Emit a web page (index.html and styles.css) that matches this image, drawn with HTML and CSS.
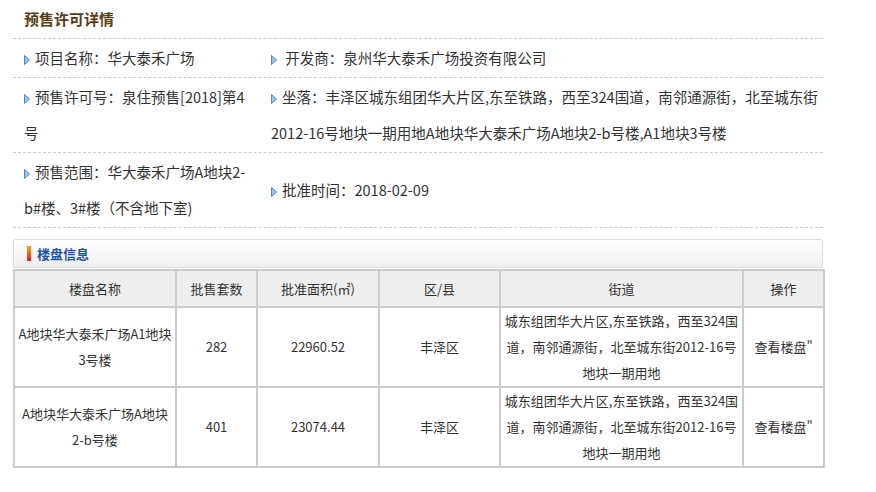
FILE: index.html
```html
<!DOCTYPE html>
<html lang="zh-CN">
<head>
<meta charset="utf-8">
<title>预售许可详情</title>
<link rel="stylesheet" href="styles.css">
</head>
<body>
<div class="wrap">
  <div class="title">预售许可详情</div>
  <div class="info-row">
    <div class="cell"><svg class="arr" viewBox="0 0 6 10"><polygon points="0.5,0.5 5.5,5 0.5,9.5" fill="#9cc4ec" stroke="#4f86c6" stroke-width="1"/></svg>项目名称：华大泰禾广场</div>
    <div class="cell"><svg class="arr" viewBox="0 0 6 10"><polygon points="0.5,0.5 5.5,5 0.5,9.5" fill="#9cc4ec" stroke="#4f86c6" stroke-width="1"/></svg>&nbsp;开发商：泉州华大泰禾广场投资有限公司</div>
  </div>
  <div class="info-row">
    <div class="cell"><svg class="arr" viewBox="0 0 6 10"><polygon points="0.5,0.5 5.5,5 0.5,9.5" fill="#9cc4ec" stroke="#4f86c6" stroke-width="1"/></svg>预售许可号：泉住预售[2018]第4号</div>
    <div class="cell"><svg class="arr" viewBox="0 0 6 10"><polygon points="0.5,0.5 5.5,5 0.5,9.5" fill="#9cc4ec" stroke="#4f86c6" stroke-width="1"/></svg>坐落：丰泽区城东组团华大片区,东至铁路，西至324国道，南邻通源街，北至城东街2012-16号地块一期用地A地块华大泰禾广场A地块2-b号楼,A1地块3号楼</div>
  </div>
  <div class="info-row">
    <div class="cell"><svg class="arr" viewBox="0 0 6 10"><polygon points="0.5,0.5 5.5,5 0.5,9.5" fill="#9cc4ec" stroke="#4f86c6" stroke-width="1"/></svg>预售范围：华大泰禾广场A地块2-b#楼、3#楼（不含地下室)</div>
    <div class="cell mid"><svg class="arr" viewBox="0 0 6 10"><polygon points="0.5,0.5 5.5,5 0.5,9.5" fill="#9cc4ec" stroke="#4f86c6" stroke-width="1"/></svg>批准时间：2018-02-09</div>
  </div>

  <div class="panel">
    <div class="panel-head"><span class="bar"></span>楼盘信息</div>
    <table class="grid">
      <colgroup>
        <col class="c1"><col class="c2"><col class="c3"><col class="c4"><col class="c5"><col class="c6">
      </colgroup>
      <thead>
        <tr><th>楼盘名称</th><th>批售套数</th><th>批准面积(㎡)</th><th>区/县</th><th>街道</th><th>操作</th></tr>
      </thead>
      <tbody>
        <tr>
          <td>A地块华大泰禾广场A1地块3号楼</td>
          <td>282</td>
          <td>22960.52</td>
          <td>丰泽区</td>
          <td>城东组团华大片区,东至铁路，西至324国道，南邻通源街，北至城东街2012-16号地块一期用地</td>
          <td>查看楼盘"</td>
        </tr>
        <tr>
          <td>A地块华大泰禾广场A地块<span class="nb">2-b号楼</span></td>
          <td>401</td>
          <td>23074.44</td>
          <td>丰泽区</td>
          <td>城东组团华大片区,东至铁路，西至324国道，南邻通源街，北至城东街2012-16号地块一期用地</td>
          <td>查看楼盘"</td>
        </tr>
      </tbody>
    </table>
  </div>
</div>
</body>
</html>
```

FILE: styles.css
```css
html, body {
  margin: 0;
  padding: 0;
  background: #fff;
}
body {
  font-family: "Microsoft YaHei", "Noto Sans CJK SC", "Noto Sans", sans-serif;
  color: #333;
}
.wrap {
  width: 810px;
  margin-left: 13px;
}
.title {
  height: 38px;
  line-height: 38px;
  padding-left: 11px;
  font-size: 15px;
  font-weight: bold;
  color: #5a3c14;
  border-bottom: 1px dashed #ccc;
}
.info-row {
  display: grid;
  grid-template-columns: 230px 1fr;
  column-gap: 17px;
  padding: 1px 0 1px 11px;
  border-bottom: 1px dashed #ccc;
  font-size: 14.5px;
  line-height: 36px;
  color: #333;
}
.cell.mid {
  align-self: center;
}
.arr {
  display: inline-block;
  width: 6px;
  height: 10px;
  margin-right: 5px;
  vertical-align: -1px;
}
.panel {
  margin-top: 11px;
}
.panel-head {
  height: 27px;
  line-height: 27px;
  border: 1px solid #ddd;
  border-radius: 3px 3px 0 0;
  background: linear-gradient(#ffffff, #efefef);
  font-size: 13px;
  font-weight: bold;
  color: #1f55a8;
  display: flex;
  align-items: center;
}
.bar {
  display: inline-block;
  width: 4px;
  height: 15px;
  margin-left: 13px;
  margin-right: 6px;
  background: linear-gradient(#f5a623, #e8201c);
}
.grid {
  width: 810px;
  border-collapse: collapse;
  table-layout: fixed;
  margin-top: 1px;
  font-size: 13px;
  color: #333;
}
.c1 { width: 162px; }
.c2 { width: 81px; }
.c3 { width: 122px; }
.c4 { width: 121px; }
.c5 { width: 243px; }
.c6 { width: 81px; }
.grid th, .grid td {
  border: 2px solid #ccc;
  text-align: center;
  vertical-align: middle;
  padding: 0 1px;
  line-height: 26px;
}
.grid th {
  font-weight: normal;
  background: #eee;
  height: 35px;
}
.grid td {
  height: 78px;
}
.nb {
  white-space: nowrap;
}
```
